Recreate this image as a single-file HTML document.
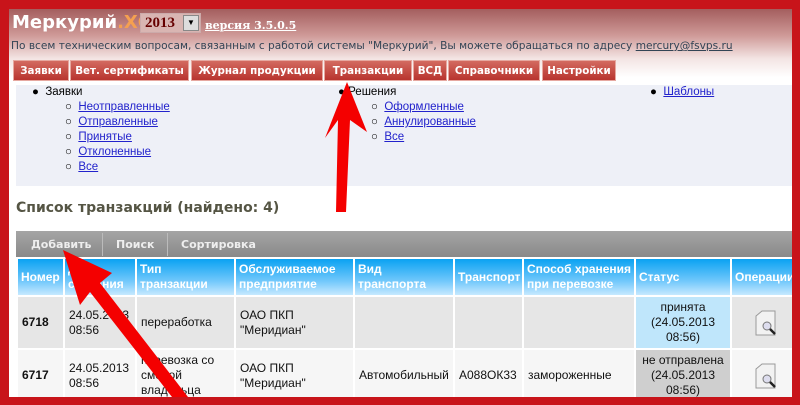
<!DOCTYPE html>
<html><head><meta charset="utf-8"><style>
*{margin:0;padding:0;box-sizing:border-box}
body{width:800px;height:405px;overflow:hidden;background:#c8141a;font-family:"Liberation Sans","DejaVu Sans",sans-serif;position:relative}
#pg{position:absolute;left:9px;top:9px;width:783px;height:388px;background:#fff;overflow:hidden}
#hd{position:absolute;left:0;top:0;width:783px;height:76px;background:linear-gradient(#a45e5e,#cf9a98 35%,#f3e4e3 65%,#fff 90%)}
.t{position:absolute;white-space:nowrap}
a{color:#2222cc;text-decoration:underline}
.tab{position:absolute;top:51px;height:21px;background:linear-gradient(#d36a60,#b8342e);color:#fff;font:bold 10.3px "DejaVu Sans",sans-serif;line-height:20px;text-align:center;border:1px solid #e6a8a0;white-space:nowrap;overflow:hidden}
#sub{position:absolute;left:7px;top:76px;width:776px;height:101px;background:#eef0f7;font:11.5px "Liberation Sans",sans-serif;color:#000}
#sub div{position:absolute;white-space:nowrap;line-height:15px}
#tb{position:absolute;left:7px;top:222px;width:776px;height:27px;background:linear-gradient(#a5a5a5,#888);font:bold 11px "DejaVu Sans",sans-serif;color:#eee;}
#tb span{position:absolute;top:7px}
table{position:absolute;left:7px;top:248px;width:785px;border-collapse:collapse;font:12px "Liberation Sans",sans-serif;table-layout:fixed}
th{background:linear-gradient(#0aa2f2,#6fc7fb 60%,#c6e9ff);color:#fff;font-weight:bold;text-align:left;padding:0 3px;height:38px;border:2px solid #fff;font-size:12px;line-height:15px;vertical-align:middle;overflow:hidden;white-space:nowrap}
td{border:2px solid #fff;padding:0 4px;line-height:15px;color:#111;overflow:hidden}
.r1 td{background:#e6e6e6;height:53px}
.r2 td{background:#f6f6f6;height:53px}
.ic{width:24px;height:26px;margin:auto;position:relative}
</style></head><body>
<div id="pg">
<div id="hd"></div>
<div class="t" style="left:3px;top:3px;font:bold 18px 'DejaVu Sans',sans-serif;color:#fff">Меркурий<span style="color:#f5a050">.ХС</span></div>
<div class="t" style="left:131px;top:4px;width:61px;height:20px;border:1px solid #caa;background:#d9b5b2;font:bold 15px 'Liberation Serif',serif;color:#600;padding-left:4px;line-height:18px">2013<span style="position:absolute;right:1px;top:1px;width:16px;height:16px;background:#ddd;border:1px solid #888;font-size:8px;text-align:center;line-height:14px;color:#000">▼</span></div>
<div class="t" style="left:196px;top:10px;font:bold 11px 'DejaVu Serif',serif;color:#fff;text-decoration:underline">версия 3.5.0.5</div>
<div class="t" style="left:2px;top:31px;font:10.6px 'DejaVu Sans',sans-serif;color:#345">По всем техническим вопросам, связанным с работой системы "Меркурий", Вы можете обращаться по адресу <u>mercury@fsvps.ru</u></div>
<div class="tab" style="left:4px;width:56px">Заявки</div>
<div class="tab" style="left:61px;width:119px">Вет. сертификаты</div>
<div class="tab" style="left:182px;width:132px">Журнал продукции</div>
<div class="tab" style="left:315px;width:88px">Транзакции</div>
<div class="tab" style="left:404px;width:34px">ВСД</div>
<div class="tab" style="left:439px;width:92px">Справочники</div>
<div class="tab" style="left:533px;width:74px">Настройки</div>
<div id="sub">
<div style="left:16px;top:0">●&nbsp; Заявки</div>
<div style="left:49px;top:15px">○ &nbsp;<a>Неотправленные</a></div>
<div style="left:49px;top:30px">○ &nbsp;<a>Отправленные</a></div>
<div style="left:49px;top:45px">○ &nbsp;<a>Принятые</a></div>
<div style="left:49px;top:60px">○ &nbsp;<a>Отклоненные</a></div>
<div style="left:49px;top:75px">○ &nbsp;<a>Все</a></div>
<div style="left:322px;top:0">● Решения</div>
<div style="left:355px;top:15px">○ &nbsp;<a>Оформленные</a></div>
<div style="left:355px;top:30px">○ &nbsp;<a>Аннулированные</a></div>
<div style="left:355px;top:45px">○ &nbsp;<a>Все</a></div>
<div style="left:634px;top:0">● &nbsp;<a>Шаблоны</a></div>
</div>
<div class="t" style="left:7px;top:191px;font:bold 14px 'DejaVu Sans',sans-serif;color:#554">Список транзакций (найдено: 4)</div>
<div id="tb"><span style="left:15px">Добавить</span><span style="left:100px">Поиск</span><span style="left:165px">Сортировка</span>
<i style="position:absolute;left:86px;top:2px;width:1px;height:23px;background:#bbb"></i><i style="position:absolute;left:151px;top:2px;width:1px;height:23px;background:#bbb"></i></div>
<table>
<colgroup><col style="width:47px"><col style="width:72px"><col style="width:99px"><col style="width:119px"><col style="width:100px"><col style="width:69px"><col style="width:112px"><col style="width:96px"><col style="width:71px"></colgroup>
<tr><th>Номер</th><th>Дата<br>создания</th><th>Тип<br>транзакции</th><th>Обслуживаемое<br>предприятие</th><th>Вид<br>транспорта</th><th>Транспорт</th><th>Способ хранения<br>при перевозке</th><th>Статус</th><th>Операции</th></tr>
<tr class="r1"><td><b>6718</b></td><td>24.05.2013<br>08:56</td><td>переработка</td><td>ОАО ПКП<br>"Меридиан"</td><td></td><td></td><td></td><td style="background:#bfe6fb;text-align:center">принята<br>(24.05.2013<br>08:56)</td><td><div class="ic"><svg width="24" height="26"><path d="M1 6 L7 1 H20 V25 H1 Z" fill="#f2f2f2" stroke="#999"/><circle cx="12" cy="16" r="4" fill="#dde" stroke="#777"/><path d="M15 19 L20 24" stroke="#222" stroke-width="2.5"/></svg></div></td></tr>
<tr class="r2"><td><b>6717</b></td><td>24.05.2013<br>08:56</td><td>перевозка со<br>сменой<br>владельца</td><td>ОАО ПКП<br>"Меридиан"</td><td>Автомобильный</td><td>А088ОК33</td><td>замороженные</td><td style="background:#cfcfcf;text-align:center">не отправлена<br>(24.05.2013<br>08:56)</td><td><div class="ic"><svg width="24" height="26"><path d="M1 6 L7 1 H20 V25 H1 Z" fill="#f2f2f2" stroke="#999"/><circle cx="12" cy="16" r="4" fill="#dde" stroke="#777"/><path d="M15 19 L20 24" stroke="#222" stroke-width="2.5"/></svg></div></td></tr>
</table>
</div>
<svg style="position:absolute;left:0;top:0" width="800" height="405"><g fill="#f40000">
<polygon points="347,82 367,132 350,120 346,212 336,212 338,120 325,138"/>
<polygon points="63,250 112,273 100,283 188,397 172,397 90,292 80,305"/>
</g></svg>
</body></html>
